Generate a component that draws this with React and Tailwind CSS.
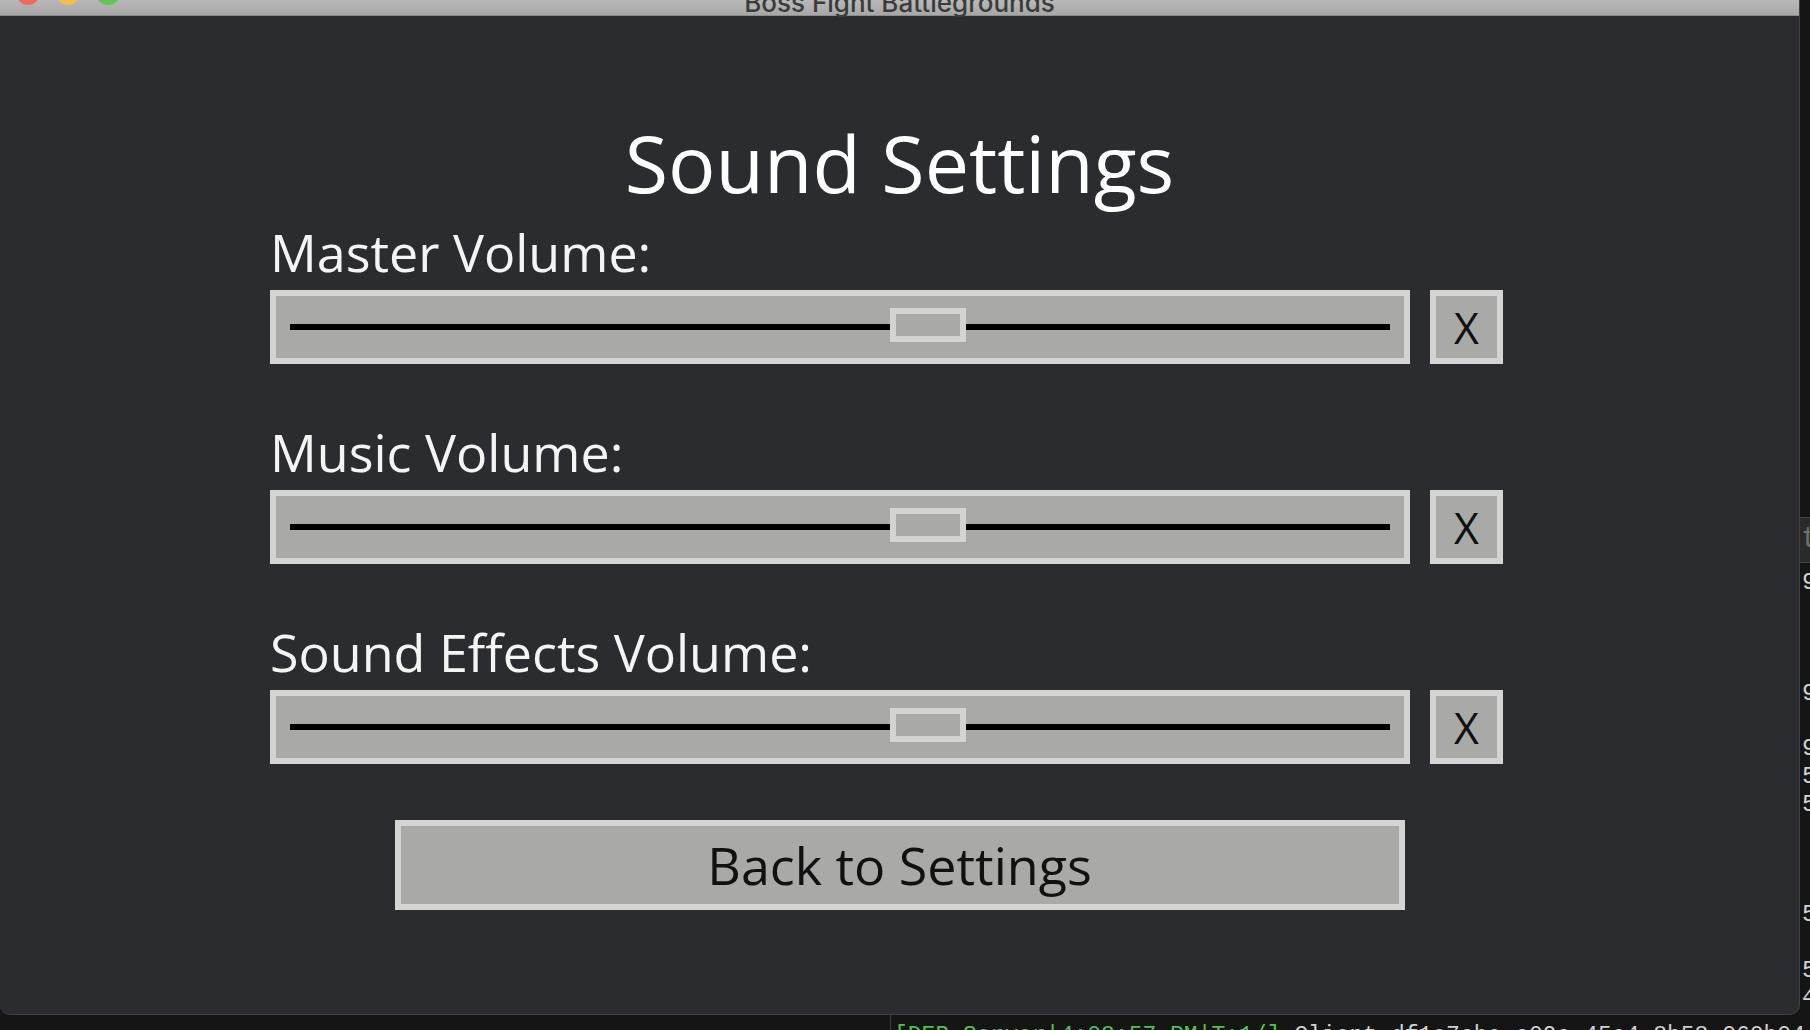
import React from 'react';

const sections = ["Master Volume:", "Music Volume:", "Sound Effects Volume:"];

// right-hand terminal peeking out behind the game window
const sideLines = ["9", "", "", "", "9", "", "9", "5", "5", "", "", "", "5", "", "5", "4"];

function VolumeRow({ label }) {
  return (
    <div className="flex flex-col">
      <div className="h-[52px] text-[52px] leading-none text-[#f4f4f4] mb-[12px] whitespace-nowrap">{label}</div>
      <div className="flex gap-[20px]">
        <div className="relative w-[1140px] h-[74px] border-[6px] border-[#d4d4d2] bg-[#a9a9a7] flex items-center px-[14px]">
          <div className="h-[6px] w-full bg-black" />
          {/* slider thumb */}
          <div className="absolute left-[614px] top-[12px] w-[76px] h-[34px] border-[6px] border-[#d4d4d2] bg-[#a9a9a7]" />
        </div>
        <button className="w-[73px] h-[74px] border-[6px] border-[#d4d4d2] bg-[#a9a9a7] flex items-center justify-center text-[43px] leading-none text-[#111]">
          X
        </button>
      </div>
    </div>
  );
}

export default function App() {
  return (
    <div className="w-[1810px] h-[1030px] bg-[#151515] overflow-hidden flex flex-col font-['Open_Sans',sans-serif]">
      <div className="flex h-[1015px]">
        {/* game window */}
        <div className="w-[1800px] h-full flex flex-col bg-[#2b2c2f] rounded-b-[10px] border-b border-r border-[#3f4043] overflow-hidden">
          <div className="relative h-[16px] shrink-0 bg-gradient-to-b from-[#b8b8b8] to-[#a7a7a7] border-b border-[#8c8c8c] flex justify-center">
            <div className="absolute left-[16px] top-[-19px] flex gap-[16px]">
              <div className="w-[24px] h-[24px] rounded-full bg-[#ee6a5f]" />
              <div className="w-[24px] h-[24px] rounded-full bg-[#f5bf4f]" />
              <div className="w-[24px] h-[24px] rounded-full bg-[#62c554]" />
            </div>
            <div className="mt-[-10px] text-[26px] leading-none font-medium text-[#3b3b3b] font-['Inter',sans-serif] whitespace-nowrap">
              Boss Fight Battlegrounds
            </div>
          </div>

          <div className="flex flex-col pt-[107px]">
            <h1 className="self-center h-[79px] text-[79px] leading-none text-white whitespace-nowrap">Sound Settings</h1>
            <div className="ml-[270px] mt-[24px] flex flex-col gap-[62px]">
              {sections.map(s => (
                <VolumeRow key={s} label={s} />
              ))}
            </div>
            <button className="self-center mt-[56px] w-[1010px] h-[90px] border-[6px] border-[#d4d4d2] bg-[#a9a9a7] flex items-center justify-center text-[52px] leading-none text-[#111]">
              Back to Settings
            </button>
          </div>
        </div>

        {/* terminal strip on the right */}
        <div className="w-[10px] h-full flex flex-col pt-[517px] font-['Liberation_Mono',monospace] overflow-hidden">
          <div className="h-[46px] shrink-0 bg-[#2a2a2a] border-t border-b border-[#444] text-[30px] leading-[42px] text-[#6f6f6f] pl-[1px]">t</div>
          <div className="flex flex-col pt-[6px]">
            {sideLines.map((t, i) => (
              <div key={i} className="h-[27.7px] text-[24px] leading-[27.7px] text-[#d2d2d2] pl-[2px] whitespace-nowrap">{t}</div>
            ))}
          </div>
        </div>
      </div>

      {/* terminal log line at the bottom */}
      <div className="h-[15px] flex">
        <div className="w-[891px] h-full border-r border-[#444]" />
        <div className="pl-[3px] pt-[10px] text-[23px] leading-none whitespace-nowrap font-['Liberation_Mono',monospace]">
          <span className="text-[#4fc24a]">[DEB.Server|4:08:57 PM|T:1/]</span>
          <span className="text-[#d0d0d0]"> Client df1e7cbe-c09c-45e4-8b58-060b04</span>
        </div>
      </div>
    </div>
  );
}
